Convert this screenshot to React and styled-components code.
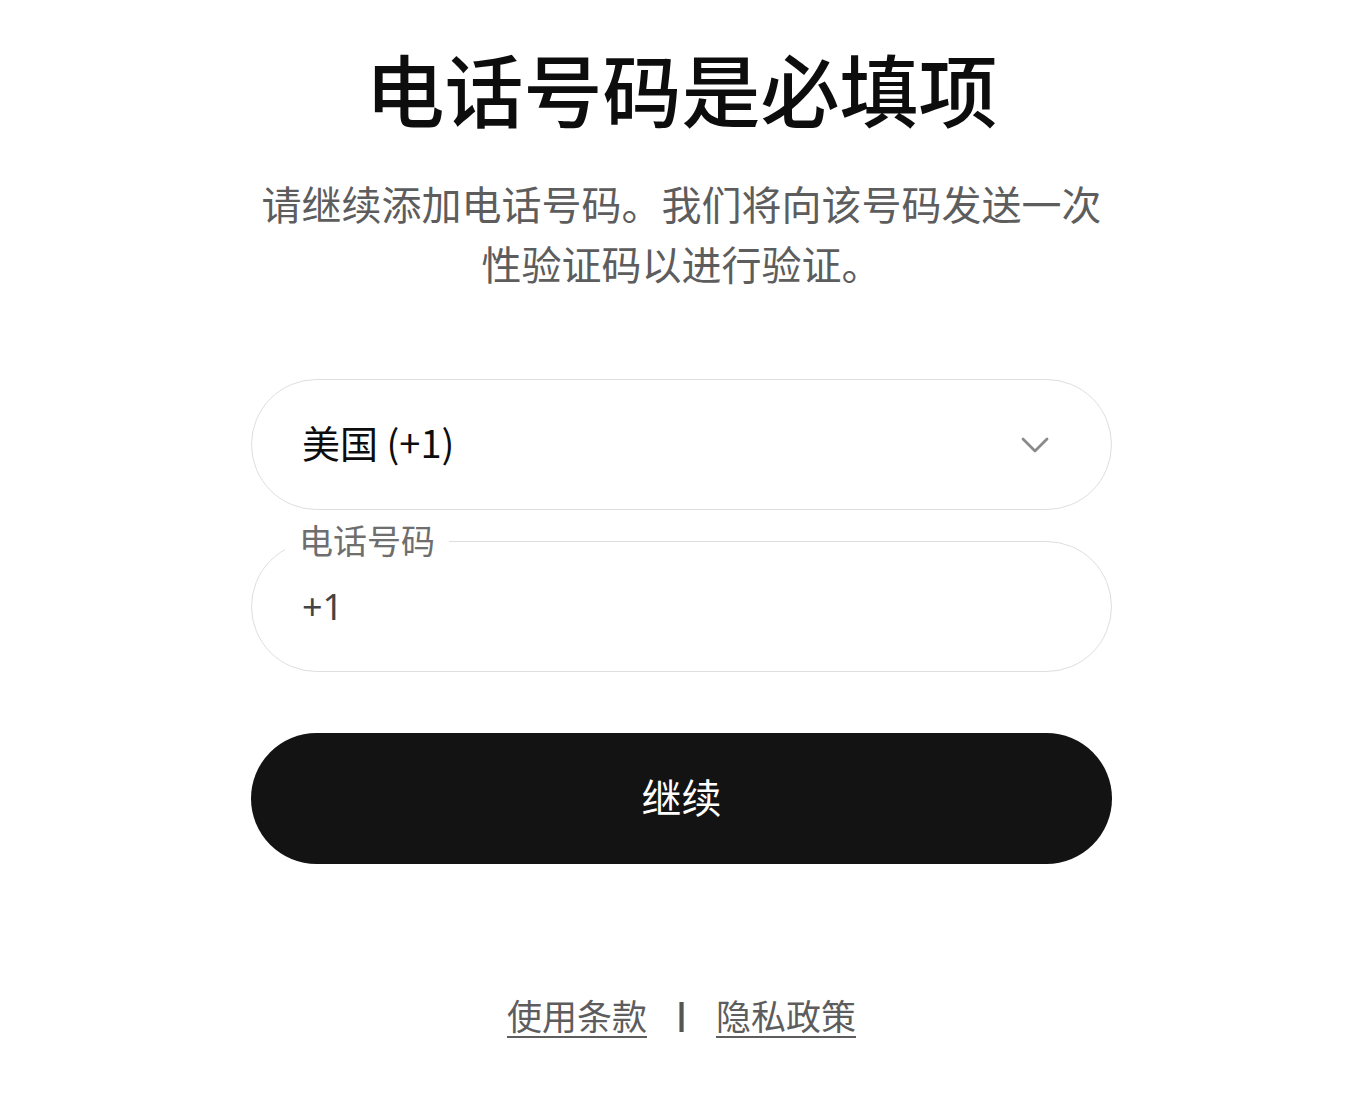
import React, { useState } from 'react'
import styled, { createGlobalStyle } from 'styled-components'

const GlobalStyle = createGlobalStyle`
  body {
    margin: 0;
    background: #ffffff;
    font-family: "Noto Sans CJK SC", "Noto Sans", sans-serif;
    color: #0d0d0d;
  }
`

const Page = styled.main`
  display: flex;
  flex-direction: column;
  align-items: center;
  padding: 41px 6px 0 0;
`

const Column = styled.div`
  width: 861px;
  display: flex;
  flex-direction: column;
  align-items: stretch;
`

const Title = styled.h1`
  margin: 0;
  font-size: 79px;
  line-height: 94px;
  font-weight: 500;
  text-align: center;
  color: #0d0d0d;
`

const Subtitle = styled.p`
  margin: 38px 0 0;
  font-size: 40px;
  line-height: 60px;
  color: #5d5d5d;
  text-align: center;
`

const Form = styled.form`
  margin-top: 86px;
  display: flex;
  flex-direction: column;
`

const Pill = styled.div`
  position: relative;
  height: 131px;
  box-sizing: border-box;
  border: 1.5px solid #dedede;
  border-radius: 66px;
  display: flex;
  align-items: center;
  padding: 0 52px 0 50px;
  margin-top: ${p => p.$gap || 0}px;
`

const SelectText = styled.span`
  flex: 1;
  font-size: 38px;
  color: #0d0d0d;
  margin-bottom: 6px;
`

const Chevron = styled.svg`
  width: 30px;
  height: 30px;
  margin-right: 9px;
`

const FloatLabel = styled.label`
  position: absolute;
  top: -24px;
  left: 33px;
  padding: 0 14px;
  background: #ffffff;
  font-size: 34px;
  line-height: 44px;
  color: #6e6e6e;
`

const Input = styled.input`
  flex: 1;
  border: 0;
  outline: none;
  background: transparent;
  font-family: "Noto Sans", "Noto Sans CJK SC", sans-serif;
  font-size: 36px;
  color: #444444;
  padding: 0;
`

const Button = styled.button`
  margin-top: 61px;
  height: 131px;
  border: 0;
  border-radius: 66px;
  background: #131313;
  color: #ffffff;
  font-family: "Noto Sans CJK SC", sans-serif;
  font-size: 40px;
  padding: 0 0 6px;
  cursor: pointer;
`

const Footer = styled.footer`
  margin-top: 125px;
  display: flex;
  justify-content: center;
  align-items: center;
  gap: 30px;
  font-size: 35px;
  color: #5d5d5d;
`

const FooterLink = styled.a`
  color: #5d5d5d;
  text-decoration: underline;
  text-underline-offset: 6px;
  text-decoration-thickness: 2px;
`

const Divider = styled.span`
  color: #555555;
  font-family: "Liberation Sans", sans-serif;
  font-weight: 700;
  font-size: 32px;
`

export default function App() {
  const [phone, setPhone] = useState('+1')

  return (
    <Page>
      <GlobalStyle />
      <Column>
        <Title>电话号码是必填项</Title>
        <Subtitle>请继续添加电话号码。我们将向该号码发送一次性验证码以进行验证。</Subtitle>

        <Form onSubmit={e => e.preventDefault()}>
          <Pill>
            <SelectText>美国 (+1)</SelectText>
            <Chevron viewBox="0 0 30 30" fill="none" stroke="#8a8a8a" strokeWidth="2.8" strokeLinecap="round" strokeLinejoin="round">
              <path d="M3 9l12 12 12-12" />
            </Chevron>
          </Pill>

          <Pill $gap={31}>
            <FloatLabel htmlFor="phone">电话号码</FloatLabel>
            <Input id="phone" value={phone} onChange={e => setPhone(e.target.value)} />
          </Pill>

          <Button type="submit">继续</Button>
        </Form>

        <Footer>
          <FooterLink href="#">使用条款</FooterLink>
          <Divider>|</Divider>
          <FooterLink href="#">隐私政策</FooterLink>
        </Footer>
      </Column>
    </Page>
  )
}
